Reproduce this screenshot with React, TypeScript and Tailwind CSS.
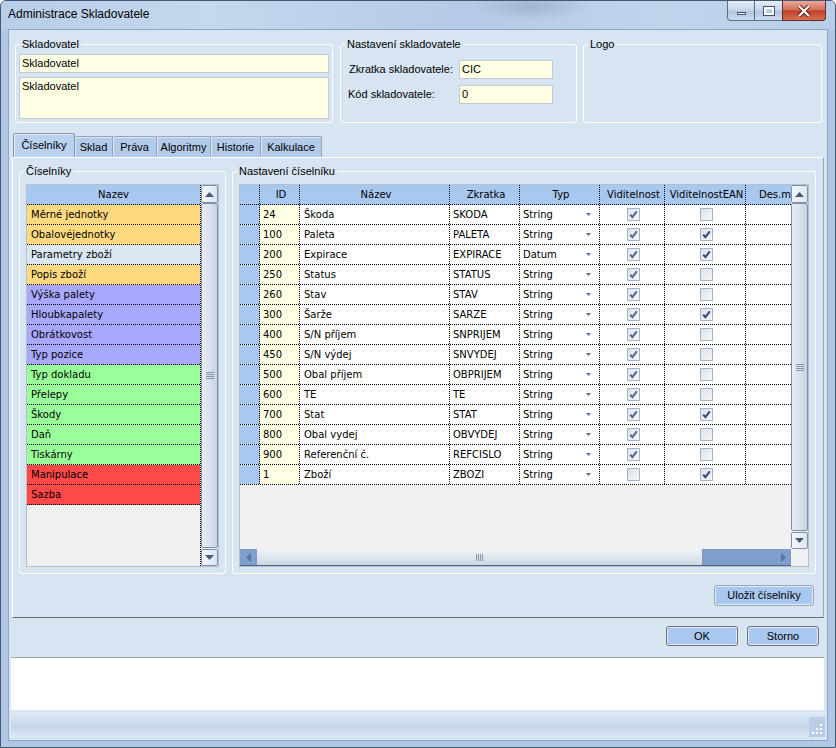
import React from "react";

type Row = [string, string, string, string, boolean, boolean];
const rows: Row[] = [
  ["24", "Škoda", "SKODA", "String", true, false],
  ["100", "Paleta", "PALETA", "String", true, true],
  ["200", "Expirace", "EXPIRACE", "Datum", true, true],
  ["250", "Status", "STATUS", "String", true, false],
  ["260", "Stav", "STAV", "String", true, false],
  ["300", "Šarže", "SARZE", "String", true, true],
  ["400", "S/N příjem", "SNPRIJEM", "String", true, false],
  ["450", "S/N výdej", "SNVYDEJ", "String", true, false],
  ["500", "Obal příjem", "OBPRIJEM", "String", true, false],
  ["600", "TE", "TE", "String", true, false],
  ["700", "Stat", "STAT", "String", true, true],
  ["800", "Obal vydej", "OBVYDEJ", "String", true, false],
  ["900", "Referenční č.", "REFCISLO", "String", true, false],
  ["1", "Zboží", "ZBOZI", "String", false, true],
];

const listItems: [string, string][] = [
  ["Měrné jednotky", "bg-[#ffd980]"],
  ["Obalovéjednotky", "bg-[#ffd980]"],
  ["Parametry zboží", "bg-[#dbe6f3]"],
  ["Popis zboží", "bg-[#ffd980]"],
  ["Výška palety", "bg-[#a8a8ff]"],
  ["Hloubkapalety", "bg-[#a8a8ff]"],
  ["Obrátkovost", "bg-[#a8a8ff]"],
  ["Typ pozice", "bg-[#a8a8ff]"],
  ["Typ dokladu", "bg-[#99ff99]"],
  ["Přelepy", "bg-[#99ff99]"],
  ["Škody", "bg-[#99ff99]"],
  ["Daň", "bg-[#99ff99]"],
  ["Tiskárny", "bg-[#99ff99]"],
  ["Manipulace", "bg-[#ff4848]"],
  ["Sazba", "bg-[#ff4848]"],
];

const tabs: [string, number][] = [
  ["Číselníky", 62],
  ["Sklad", 38],
  ["Práva", 44],
  ["Algoritmy", 54],
  ["Historie", 50],
  ["Kalkulace", 61],
];

function Fieldset({
  legend,
  className = "",
  children,
}: {
  legend: string;
  className?: string;
  children?: React.ReactNode;
}) {
  return (
    <fieldset className={`border border-white rounded-[3px] min-w-0 shrink-0 ${className}`}>
      <legend className="ml-[4px] px-[2px] text-[11px] leading-[13px]">{legend}</legend>
      {children}
    </fieldset>
  );
}

function ArrowBtn({ dir, className = "" }: { dir: "up" | "down"; className?: string }) {
  return (
    <div
      className={`shrink-0 border border-[#7f90ad] rounded-[2px] bg-[linear-gradient(90deg,#f4f7fb,#dde5ef)] flex items-center justify-center ${className}`}
    >
      <svg width="9" height="5" viewBox="0 0 9 5">
        {dir === "up" ? (
          <path d="M0 5L4.5 0L9 5Z" fill="#485a7c" />
        ) : (
          <path d="M0 0L4.5 5L9 0Z" fill="#485a7c" />
        )}
      </svg>
    </div>
  );
}

function VThumb({ className = "" }: { className?: string }) {
  return (
    <div
      className={`border border-[#7f90ad] rounded-[2px] bg-[linear-gradient(90deg,#e9eef5,#d6dfea_60%,#c6d2e1)] flex flex-col items-center justify-center gap-[1px] ${className}`}
    >
      {[0, 1, 2, 3].map((i) => (
        <div key={i} className="w-[8px] h-[1px] bg-[#8796ad]" />
      ))}
    </div>
  );
}

function Check({ checked, dim }: { checked: boolean; dim?: boolean }) {
  return (
    <div className="w-[13px] h-[13px] border border-[#a3b3c9] bg-[linear-gradient(135deg,#dde2e9,#f6f7f9)] flex items-center justify-center">
      {checked && (
        <svg width="11" height="11" viewBox="0 0 11 11">
          <path
            d="M2.2 5.6L4.4 8.2L8.8 2.4"
            fill="none"
            stroke={dim ? "#55698f" : "#2f4a7c"}
            strokeWidth="2"
          />
        </svg>
      )}
    </div>
  );
}

function TitleBar() {
  return (
    <div className="h-[29px] shrink-0 flex items-start justify-between bg-[radial-gradient(ellipse_60px_14px_at_530px_6px,#9fb6d2,transparent),linear-gradient(90deg,#b7cee8_0%,#c4d8ee_25%,#b3cbe6_55%,#c0d5ec_80%,#b8cee8_100%)]">
      <div className="pl-[7px] pt-[6px] text-[12px] leading-[14px] text-black font-['Liberation_Sans',Arial,sans-serif]">
        Administrace Skladovatele
      </div>
      <div className="flex mr-[9px]">
        <div className="w-[28px] h-[20px] border border-[#5a6f8c] border-t-0 rounded-bl-[4px] bg-[linear-gradient(180deg,#e6eef8,#c3d4ea_50%,#aec3de_51%,#cfdcee)] flex items-end justify-center pb-[5px]">
          <div className="w-[9px] h-[3px] bg-white border border-[#43536a]" />
        </div>
        <div className="w-[27px] h-[20px] border-b border-[#5a6f8c] bg-[linear-gradient(180deg,#e6eef8,#c3d4ea_50%,#aec3de_51%,#cfdcee)] flex items-center justify-center">
          <div className="w-[10px] h-[8px] border-[2px] border-white outline outline-1 outline-[#43536a] bg-transparent" />
        </div>
        <div className="w-[44px] h-[20px] border border-[#5b3030] border-t-0 rounded-br-[4px] bg-[linear-gradient(180deg,#eba99d,#d7735f_45%,#c2402b_52%,#d5704f)] flex items-center justify-center">
          <svg width="14" height="12" viewBox="0 0 14 12">
            <path d="M2 1L12 11M12 1L2 11" stroke="#5a1d14" strokeWidth="4" />
            <path d="M2 1L12 11M12 1L2 11" stroke="#ffffff" strokeWidth="2.2" />
          </svg>
        </div>
      </div>
    </div>
  );
}

function Input({ className = "", children }: { className?: string; children?: React.ReactNode }) {
  return (
    <div
      className={`border border-[#c3cad4] bg-[#ffffe3] pl-[2px] text-[11px] whitespace-nowrap overflow-hidden ${className}`}
    >
      {children}
    </div>
  );
}

function Cell({ w, className = "", children }: { w: string; className?: string; children?: React.ReactNode }) {
  return (
    <div
      className={`${w} shrink-0 h-full border-r border-dotted border-black pl-[3px] whitespace-nowrap overflow-hidden ${className}`}
    >
      {children}
    </div>
  );
}

function Grid() {
  return (
    <div className="ml-[6px] mt-[6px] w-[570px] h-[383px] border border-[#b5c0cd] flex flex-col font-['DejaVu_Sans',sans-serif] text-[10px] leading-[19px] text-black">
      <div className="flex h-[364px]">
        <div className="w-[551px] shrink-0 overflow-hidden flex flex-col bg-[#f0f0f0]">
          <div className="flex h-[20px] shrink-0 bg-[#a9c8ef] border-b border-dotted border-black">
            <Cell w="w-[20px]" />
            <Cell w="w-[40px]" className="text-center pl-0">ID</Cell>
            <Cell w="w-[150px]" className="text-center pl-0">Název</Cell>
            <Cell w="w-[70px]" className="text-center pl-0">Zkratka</Cell>
            <Cell w="w-[80px]" className="text-center pl-0">Typ</Cell>
            <Cell w="w-[65px]" className="text-center pl-0">Viditelnost</Cell>
            <Cell w="w-[81px]" className="text-center pl-0">ViditelnostEAN</Cell>
            <Cell w="w-[45px]" className="pl-[13px] border-r-0">Des.m</Cell>
          </div>
          {rows.map((r, i) => (
            <div key={i} className="flex h-[20px] shrink-0 bg-white border-b border-dotted border-black">
              <Cell w="w-[20px]" className="bg-[#a9c8ef] pl-0" />
              <Cell w="w-[40px]" className="bg-[#ffffe3]">{r[0]}</Cell>
              <Cell w="w-[150px]" className="pl-[4px]">{r[1]}</Cell>
              <Cell w="w-[70px]">{r[2]}</Cell>
              <Cell w="w-[80px]" className="flex items-center justify-between pr-[8px]">
                <span>{r[3]}</span>
                <svg width="5" height="3" viewBox="0 0 5 3">
                  <path d="M0 0H5L2.5 3Z" fill="#55719f" />
                </svg>
              </Cell>
              <Cell w="w-[65px]" className="flex items-center justify-center pl-0">
                <Check checked={r[4]} dim />
              </Cell>
              <Cell w="w-[81px]" className="flex items-center justify-center pl-0">
                <Check checked={r[5]} />
              </Cell>
              <Cell w="w-[45px]" className="border-r-0" />
            </div>
          ))}
        </div>
        <div className="w-[17px] shrink-0 flex flex-col bg-[#e9edf3]">
          <ArrowBtn dir="up" className="h-[18px]" />
          <VThumb className="flex-1 mb-[1px]" />
          <ArrowBtn dir="down" className="h-[17px]" />
        </div>
      </div>
      <div className="flex h-[17px] shrink-0">
        <div className="w-[551px] shrink-0 flex border-b border-[#4f6188]">
          <div className="w-[17px] shrink-0 bg-[#7f9ecb] flex items-center justify-center">
            <svg width="5" height="9" viewBox="0 0 5 9">
              <path d="M5 0L0 4.5L5 9Z" fill="#56739f" />
            </svg>
          </div>
          <div className="w-[446px] shrink-0 bg-[linear-gradient(180deg,#f1f4f8,#dbe3ec_60%,#cdd7e3)] border-r border-[#8392ab] flex items-center justify-center gap-[1px]">
            {[0, 1, 2, 3].map((i) => (
              <div key={i} className="w-[1px] h-[7px] bg-[#8796ad]" />
            ))}
          </div>
          <div className="flex-1 bg-[#7f9ecb] flex items-center justify-end pr-[5px]">
            <svg width="5" height="9" viewBox="0 0 5 9">
              <path d="M0 0L5 4.5L0 9Z" fill="#56739f" />
            </svg>
          </div>
        </div>
        <div className="w-[17px] shrink-0 bg-[#f0f0f0]" />
      </div>
    </div>
  );
}

function List() {
  return (
    <div className="ml-[6px] mt-[6px] w-[193px] h-[383px] border border-[#b5c0cd] flex font-['DejaVu_Sans',sans-serif] text-[10px] leading-[19px] text-black">
      <div className="w-[174px] shrink-0 flex flex-col bg-[#f0f0f0] border-r border-dotted border-black">
        <div className="h-[20px] shrink-0 bg-[#a9c8ef] border-b border-dotted border-black text-center">Nazev</div>
        {listItems.map(([t, c]) => (
          <div key={t} className={`h-[20px] shrink-0 ${c} border-b border-dotted border-black pl-[4px] whitespace-nowrap`}>
            {t}
          </div>
        ))}
      </div>
      <div className="w-[17px] shrink-0 flex flex-col bg-[#e9edf3]">
        <ArrowBtn dir="up" className="h-[18px]" />
        <VThumb className="flex-1 mb-[1px]" />
        <ArrowBtn dir="down" className="h-[17px]" />
      </div>
    </div>
  );
}

export default function App() {
  return (
    <div className="w-[836px] h-[748px] overflow-hidden bg-[#b1c8e4] border border-[#46586f] rounded-t-[6px] flex flex-col font-['Liberation_Sans',Arial,sans-serif] text-[11px] leading-[13px] text-black">
      <TitleBar />
      <div className="flex flex-1 min-h-0 pl-[8px] pr-[7px] pb-[7px]">
        <div className="w-[818px] h-[710px] flex flex-col bg-[#d7e4f2] shadow-[0_0_0_1px_#8ea6c3]">
          {/* top groups */}
          <div className="flex mt-[8px] ml-[6px]">
            <Fieldset legend="Skladovatel" className="w-[318px] h-[85px]">
              <div className="px-[3px] pt-[3px] flex flex-col gap-[4px]">
                <Input className="h-[19px] leading-[17px]">Skladovatel</Input>
                <Input className="h-[42px] leading-[15px] pt-[1px]">Skladovatel</Input>
              </div>
            </Fieldset>
            <Fieldset legend="Nastavení skladovatele" className="w-[237px] h-[85px] ml-[7px]">
              <div className="pl-[8px] pt-[9px] flex flex-col gap-[6px]">
                <div className="flex items-center h-[19px]">
                  <span className="w-[110px] shrink-0">Zkratka skladovatele:</span>
                  <Input className="w-[94px] h-[19px] leading-[17px]">CIC</Input>
                </div>
                <div className="flex items-center h-[19px]">
                  <span className="w-[110px] shrink-0 -ml-[1px]">Kód skladovatele:</span>
                  <Input className="w-[94px] h-[19px] leading-[17px] ml-[1px]">0</Input>
                </div>
              </div>
            </Fieldset>
            <Fieldset legend="Logo" className="w-[239px] h-[85px] ml-[6px]" />
          </div>

          {/* tabs */}
          <div className="flex items-end h-[24px] mt-[10px] ml-[4px]">
            {tabs.map(([t, w], i) => (
              <div
                key={t}
                style={{ width: w }}
                className={
                  i === 0
                    ? "h-[24px] shrink-0 border border-b-0 border-[#8a93a3] rounded-t-[2px] bg-[#bad2f1] shadow-[inset_1px_1px_0_#e4eefb] flex items-center justify-center pb-[1px]"
                    : "h-[21px] shrink-0 border border-b-0 border-l-0 border-[#9aa3b1] rounded-t-[2px] bg-[#b3cbea] shadow-[inset_1px_1px_0_#dae7f7] flex items-center justify-center"
                }
              >
                {t}
              </div>
            ))}
          </div>

          {/* panel */}
          <div className="ml-[3px] w-[812px] h-[461px] shrink-0 border border-white border-r-[#9aa3ad] border-b-[#6d6d6d] flex flex-col">
            <div className="flex mt-[7px] ml-[6px]">
              <Fieldset legend="Číselníky" className="w-[207px] h-[409px]">
                <List />
              </Fieldset>
              <Fieldset legend="Nastavení číselníku" className="w-[584px] h-[409px] ml-[6px]">
                <Grid />
              </Fieldset>
            </div>
            <div className="flex justify-end mt-[11px] mr-[9px]">
              <div className="w-[100px] h-[21px] rounded-[3px] border border-[#9ea6b0] bg-[#a9c8ef] shadow-[inset_0_0_0_1px_#dfeafa] flex items-center justify-center">
                Uložit číselníky
              </div>
            </div>
          </div>

          {/* OK / Storno */}
          <div className="flex justify-end gap-[9px] mt-[8px] mr-[8px]">
            <div className="w-[72px] h-[20px] rounded-[3px] border border-[#707070] bg-[#a9c8ef] shadow-[inset_0_0_0_1px_#e1ebf9] flex items-center justify-center">
              OK
            </div>
            <div className="w-[72px] h-[20px] rounded-[3px] border border-[#707070] bg-[#a9c8ef] shadow-[inset_0_0_0_1px_#e1ebf9] flex items-center justify-center">
              Storno
            </div>
          </div>

          {/* white area */}
          <div className="mt-[11px] ml-[2px] mr-[3px] h-[53px] shrink-0 bg-white border-t border-[#a0a4a8]" />

          {/* status bar */}
          <div className="mt-[2px] ml-[2px] mr-[2px] h-[25px] shrink-0 bg-[linear-gradient(180deg,#e0eaf6_0%,#cfdef0_35%,#c4d5eb_60%,#dfe9f6_100%)] flex justify-end items-end">
            <div className="w-[16px] h-[20px] bg-[#b9cde6] flex items-end justify-end p-[2px]">
              <svg width="11" height="11" viewBox="0 0 11 11">
                <rect x="8" y="0" width="2" height="2" fill="#ffffff" />
                <rect x="4" y="4" width="2" height="2" fill="#ffffff" />
                <rect x="8" y="4" width="2" height="2" fill="#ffffff" />
                <rect x="0" y="8" width="2" height="2" fill="#ffffff" />
                <rect x="4" y="8" width="2" height="2" fill="#ffffff" />
                <rect x="8" y="8" width="2" height="2" fill="#ffffff" />
              </svg>
            </div>
          </div>
        </div>
      </div>
    </div>
  );
}
